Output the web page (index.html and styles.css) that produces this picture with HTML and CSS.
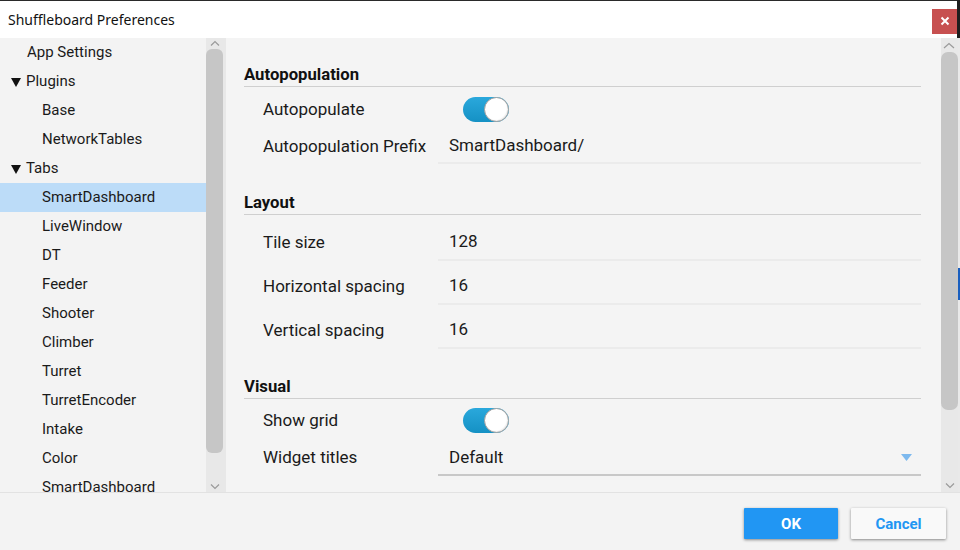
FILE: index.html
```html
<!DOCTYPE html>
<html>
<head>
<meta charset="utf-8">
<link rel="stylesheet" href="styles.css">
</head>
<body>
<div class="window">
  <div class="titlebar">
    <span class="title">Shuffleboard Preferences</span>
    <div class="close"><svg width="10" height="10" viewBox="0 0 10 10"><path d="M1.5 1.5 L8.5 8.5 M8.5 1.5 L1.5 8.5" stroke="#fff" stroke-width="2"/></svg></div>
    <div class="edge-top"></div>
  </div>
  <div class="main">
    <div class="sidebar">
      <ul class="tree">
        <li class="lvl0">App Settings</li>
        <li class="lvl0 parent"><svg class="tri" width="10" height="9" viewBox="0 0 10 9"><polygon points="0,0 10,0 5,9" fill="#111"/></svg>Plugins</li>
        <li class="lvl1">Base</li>
        <li class="lvl1">NetworkTables</li>
        <li class="lvl0 parent"><svg class="tri" width="10" height="9" viewBox="0 0 10 9"><polygon points="0,0 10,0 5,9" fill="#111"/></svg>Tabs</li>
        <li class="lvl1 selected">SmartDashboard</li>
        <li class="lvl1">LiveWindow</li>
        <li class="lvl1">DT</li>
        <li class="lvl1">Feeder</li>
        <li class="lvl1">Shooter</li>
        <li class="lvl1">Climber</li>
        <li class="lvl1">Turret</li>
        <li class="lvl1">TurretEncoder</li>
        <li class="lvl1">Intake</li>
        <li class="lvl1">Color</li>
        <li class="lvl1">SmartDashboard</li>
      </ul>
      <div class="vscroll left-scroll">
        <svg class="arrow up" width="10" height="6" viewBox="0 0 10 6"><path d="M1 5.5 L5 1.5 L9 5.5" fill="none" stroke="#9a9a9a" stroke-width="1.2"/></svg>
        <div class="thumb"></div>
        <svg class="arrow down" width="10" height="6" viewBox="0 0 10 6"><path d="M1 0.5 L5 4.5 L9 0.5" fill="none" stroke="#9a9a9a" stroke-width="1.2"/></svg>
      </div>
    </div>
    <div class="content">
      <section class="group">
        <h2 class="group-title">Autopopulation</h2>
        <div class="rows">
          <div class="row">
            <span class="label">Autopopulate</span>
            <div class="toggle"><div class="knob"></div></div>
          </div>
          <div class="row">
            <span class="label">Autopopulation Prefix</span>
            <div class="field">SmartDashboard/</div>
          </div>
        </div>
      </section>
      <section class="group layout">
        <h2 class="group-title">Layout</h2>
        <div class="rows tall">
          <div class="row">
            <span class="label">Tile size</span>
            <div class="field">128</div>
          </div>
          <div class="row">
            <span class="label">Horizontal spacing</span>
            <div class="field">16</div>
          </div>
          <div class="row">
            <span class="label">Vertical spacing</span>
            <div class="field">16</div>
          </div>
        </div>
      </section>
      <section class="group visual">
        <h2 class="group-title">Visual</h2>
        <div class="rows">
          <div class="row">
            <span class="label">Show grid</span>
            <div class="toggle"><div class="knob"></div></div>
          </div>
          <div class="row">
            <span class="label">Widget titles</span>
            <div class="field combo">Default<svg class="caret" width="11" height="7" viewBox="0 0 11 7"><polygon points="0,0 11,0 5.5,7" fill="#7db9ee"/></svg></div>
          </div>
        </div>
      </section>
    </div>
    <div class="vscroll right-scroll">
      <svg class="arrow up" width="12" height="7" viewBox="0 0 12 7"><path d="M1 6 L6 1.5 L11 6" fill="none" stroke="#9a9a9a" stroke-width="1.2"/></svg>
      <div class="thumb"></div>
      <svg class="arrow down" width="10" height="6" viewBox="0 0 10 6"><path d="M1 0.5 L5 4.5 L9 0.5" fill="none" stroke="#9a9a9a" stroke-width="1.2"/></svg>
    </div>
    <div class="edge-right"><div class="blue"></div></div>
  </div>
  <div class="footer">
    <button class="btn ok">OK</button>
    <button class="btn cancel">Cancel</button>
  </div>
</div>
</body>
</html>
```

FILE: styles.css
```css
* { box-sizing: border-box; }
html, body { margin: 0; padding: 0; }
body {
  width: 960px;
  height: 550px;
  overflow: hidden;
  background: #f3f3f3;
  font-family: Roboto, "Liberation Sans", sans-serif;
  color: #1a1a1a;
}
.window {
  width: 960px;
  height: 550px;
  display: flex;
  flex-direction: column;
}
.titlebar {
  position: relative;
  height: 38px;
  flex: none;
  background: #fff;
  display: flex;
  align-items: center;
  padding-left: 8px;
  border-right: 3px solid #1e1e1e;
}
.edge-top {
  position: absolute;
  left: 0; top: 0; right: 0;
  height: 1px;
  background: #2a2a2a;
}
.title {
  font-family: "Noto Sans", "Open Sans", sans-serif;
  font-size: 14px;
  color: #111;
  flex: 1;
  margin-top: 1px;
}
.close {
  width: 25px;
  height: 25px;
  background: #c75050;
  display: flex;
  align-items: center;
  justify-content: center;
  margin-top: 4px;
}
.main {
  height: 455px;
  flex: none;
  display: flex;
  border-bottom: 1px solid #e2e2e2;
}
.sidebar {
  width: 226px;
  display: flex;
  background: #f3f3f3;
}
.tree {
  list-style: none;
  margin: 0;
  padding: 0;
  width: 206px;
  overflow: hidden;
  font-size: 15px;
}
.tree li {
  height: 29px;
  line-height: 29px;
  white-space: nowrap;
  display: flex;
  align-items: center;
}
.tree .lvl0 { padding-left: 27px; }
.tree .lvl0.parent { padding-left: 11px; }
.tree .tri { margin-right: 5px; margin-top: 1px; }
.tree .lvl1 { padding-left: 42px; }
.tree .selected { background: #bcdcf8; }
.vscroll {
  position: relative;
  background: #e8e8e8;
  flex: none;
}
.vscroll .thumb {
  position: absolute;
  background: #c6c6c6;
  border-radius: 6px;
}
.vscroll .arrow { position: absolute; }
.left-scroll { width: 20px; }
.left-scroll .thumb { left: 0; width: 17px; top: 11px; height: 404px; }
.left-scroll .arrow { left: 4px; }
.left-scroll .arrow.up { top: 2px; }
.left-scroll .arrow.down { top: 446px; }
.content {
  flex: 1;
  background: #f4f4f4;
  padding: 26px 20px 0 18px;
  overflow: hidden;
}
.group.layout { margin-top: 27px; }
.group.visual { margin-top: 23px; }
.group-title {
  margin: 0;
  font-size: 16.7px;
  font-weight: bold;
  height: 23px;
  line-height: 22px;
  border-bottom: 1px solid #cfcfcf;
  color: #111;
}
.rows { padding-top: 4px; padding-left: 19px; }
.visual .rows { padding-top: 3px; }
.row {
  height: 37px;
  display: flex;
  align-items: center;
  font-size: 17px;
}
.rows.tall { padding-top: 6px; }
.rows.tall .row { height: 44px; }
.label { width: 175px; flex: none; padding-bottom: 2px; }
.field {
  flex: 1;
  height: 35px;
  display: flex;
  align-items: center;
  padding-left: 11px;
  padding-bottom: 2px;
  border-bottom: 2px solid #ebebeb;
}
.field.combo {
  height: 36px;
  padding-bottom: 0;
  border-bottom: 2px solid #c8c8c8;
  justify-content: space-between;
  padding-right: 9px;
}
.caret { margin-top: 1px; }
.toggle {
  margin-left: 25px;
  width: 46px;
  height: 25px;
  border-radius: 13px;
  background: linear-gradient(#2aa8dc, #1591c4);
  position: relative;
}
.knob {
  position: absolute;
  right: 0;
  top: 0;
  width: 25px;
  height: 25px;
  border-radius: 50%;
  background: #fff;
  border: 1px solid #9f9f9f;
  box-shadow: inset -1px -1px 1px rgba(0,0,0,0.08);
}
.right-scroll { width: 17px; }
.right-scroll .thumb { left: 0; width: 17px; top: 14px; height: 358px; border-radius: 7px; }
.right-scroll .arrow { left: 2px; }
.right-scroll .arrow.up { top: 4px; }
.right-scroll .arrow.down { top: 445px; left: 4px; }
.edge-right {
  width: 2px;
  flex: none;
  background: #e9e9e9;
  position: relative;
}
.edge-right .blue {
  position: absolute;
  left: 0; top: 230px;
  width: 2px; height: 32px;
  background: #1a5fbf;
}
.footer {
  flex: 1;
  display: flex;
  justify-content: flex-end;
  align-items: flex-start;
  gap: 13px;
  padding: 15px 14px 0 0;
  background: #f3f3f3;
}
.btn {
  height: 31px;
  border: none;
  border-radius: 1px;
  font-family: Roboto, "Liberation Sans", sans-serif;
  font-size: 15px;
  font-weight: bold;
  box-shadow: 0 1px 3px rgba(0,0,0,0.45);
  padding: 0;
}
.btn.ok { width: 94px; background: #2196f3; color: #fff; }
.btn.cancel { width: 95px; background: #f9f9f9; color: #2196f3; }
```
